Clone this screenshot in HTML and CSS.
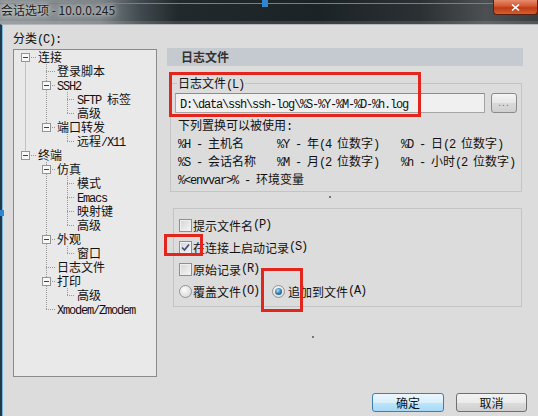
FILE: index.html
```html
<!DOCTYPE html>
<html lang="zh-CN">
<head>
<meta charset="utf-8">
<title>会话选项</title>
<link rel="stylesheet" href="styles.css">
</head>
<body>
<div class="window">
  <div class="titlebar">
    <span class="title">会话选项 - 10.0.0.245</span>
    <button class="close" aria-label="关闭">
      <svg width="9" height="7" viewBox="0 0 9 7"><path d="M1 0.5L8 6.5M8 0.5L1 6.5" stroke="#fff" stroke-width="1.6" fill="none"/></svg>
    </button>
  </div>
  <div class="client">
    <div class="top">
      <div class="left">
        <div class="cat-label">分类<span class="m">(C):</span></div>
        <div class="tree">
          <svg class="tree-lines" width="142" height="326" viewBox="0 0 142 326">
            <path class="dots" d="M11.5 7.5V105.5M32.5 14V77.5M53.5 42V63.5M53.5 84V91.5M32.5 112V259.5M53.5 126V175.5M53.5 196V203.5M53.5 238V245.5
              M11 7.5H22M11 105.5H22
              M32 21.5H41M32 35.5H41M32 77.5H41M32 119.5H41M32 189.5H41M32 217.5H41M32 231.5H41M32 259.5H41
              M53 49.5H61M53 63.5H61M53 91.5H61M53 133.5H61M53 147.5H61M53 161.5H61M53 175.5H61M53 203.5H61M53 245.5H61"/>
            <g class="exp">
              <rect x="7.5" y="3.5" width="8" height="8"/>
              <rect x="7.5" y="101.5" width="8" height="8"/>
              <rect x="28.5" y="31.5" width="8" height="8"/>
              <rect x="28.5" y="73.5" width="8" height="8"/>
              <rect x="28.5" y="115.5" width="8" height="8"/>
              <rect x="28.5" y="185.5" width="8" height="8"/>
              <rect x="28.5" y="227.5" width="8" height="8"/>
            </g>
            <path class="minus" d="M9 7.5H14M9 105.5H14M30 35.5H35M30 77.5H35M30 119.5H35M30 189.5H35M30 231.5H35"/>
          </svg>
          <ul class="tree-list">
            <li class="l0">连接</li>
            <li class="l1">登录脚本</li>
            <li class="l1"><span class="m">SSH2</span></li>
            <li class="l2"><span class="m">SFTP </span>标签</li>
            <li class="l2">高级</li>
            <li class="l1">端口转发</li>
            <li class="l2">远程<span class="m">/X11</span></li>
            <li class="l0">终端</li>
            <li class="l1">仿真</li>
            <li class="l2">模式</li>
            <li class="l2"><span class="m">Emacs</span></li>
            <li class="l2">映射键</li>
            <li class="l2">高级</li>
            <li class="l1">外观</li>
            <li class="l2">窗口</li>
            <li class="l1">日志文件</li>
            <li class="l1">打印</li>
            <li class="l2">高级</li>
            <li class="l1"><span class="m">Xmodem/Zmodem</span></li>
          </ul>
        </div>
      </div>
      <div class="right">
        <div class="header">日志文件</div>
        <fieldset class="group g1">
          <legend>日志文件<span class="m">(L)</span></legend>
          <div class="file-row">
            <div class="input"><span class="m">D:\data\ssh\ssh-log\%S-%Y-%M-%D-%h.log</span></div>
            <button class="browse">...</button>
          </div>
          <div class="hint">下列置换可以被使用<span class="m">:</span></div>
          <div class="subs">
            <div><span class="m">%H - </span>主机名</div>
            <div><span class="m">%Y - </span>年<span class="m">(4 </span>位数字<span class="m">)</span></div>
            <div><span class="m">%D - </span>日<span class="m">(2 </span>位数字<span class="m">)</span></div>
            <div><span class="m">%S - </span>会话名称</div>
            <div><span class="m">%M - </span>月<span class="m">(2 </span>位数字<span class="m">)</span></div>
            <div><span class="m">%h - </span>小时<span class="m">(2 </span>位数字<span class="m">)</span></div>
            <div class="wide"><span class="m">%&lt;envvar&gt;% - </span>环境变量</div>
          </div>
        </fieldset>
        <fieldset class="group g2">
          <div class="opt"><span class="cb"></span>提示文件名<span class="m">(P)</span></div>
          <div class="opt"><span class="cb"><svg width="11" height="11" viewBox="0 0 11 11"><path d="M2 5.5L4.5 8L9 2.5" stroke="#3f4f78" stroke-width="1.7" fill="none"/></svg></span>在连接上启动记录<span class="m">(S)</span></div>
          <div class="opt"><span class="cb"></span>原始记录<span class="m">(R)</span></div>
          <div class="opt">
            <span class="rb"></span>覆盖文件<span class="m">(O)</span>
            <span class="rb on second"></span>追加到文件<span class="m">(A)</span>
          </div>
        </fieldset>
      </div>
    </div>
    <div class="buttons">
      <button class="btn btn-ok">确定</button>
      <button class="btn btn-cancel">取消</button>
    </div>
  </div>

  <span class="handle h-top"></span>
  <span class="handle h-left"></span>
  <span class="speck s1"></span>
  <span class="speck s2"></span>
  <span class="anno a1"></span>
  <span class="anno a2"></span>
  <span class="anno a3"></span>
</div>
</body>
</html>
```

FILE: styles.css
```css
* { box-sizing: border-box; }
html, body { margin: 0; padding: 0; }
body {
  width: 538px;
  height: 416px;
  overflow: hidden;
  background: #dcdcdc;
  font-family: "Noto Sans CJK SC", "Liberation Sans", sans-serif;
  font-size: 12px;
  color: #111;
}
.m {
  font-family: "Liberation Mono", "DejaVu Sans Mono", monospace;
  font-size: 12px;
  letter-spacing: -1.2px;
  white-space: pre;
}
.window {
  position: relative;
  width: 538px;
  height: 416px;
  display: flex;
  flex-direction: column;
  background: #dcdcdc;
}

/* title bar */
.titlebar {
  height: 24px;
  flex: none;
  display: flex;
  justify-content: space-between;
  align-items: flex-start;
  background:
    linear-gradient(to bottom, transparent 3px, #3d8fd4 3px, #3d8fd4 4px, transparent 4px, transparent 21px, rgba(255,255,255,0.12) 21px),
    linear-gradient(90deg, #8d9497 0, #7a8286 100px, #414a4e 140px, #22292d 178px, #1c2327 320px, #2b3033 420px, #4d5052 486px, #3a3d40 538px);
}
.title {
  padding: 2px 0 0 1px;
  line-height: 16px;
  color: #1e1e1e;
  white-space: nowrap;
  text-shadow: 0 0 4px #e6e6e6, 0 0 8px #cfcfcf;
}
.close {
  width: 45px;
  height: 15px;
  padding: 0;
  border: 1px solid #5b2010;
  border-top: none;
  border-radius: 0 0 4px 4px;
  background: linear-gradient(#e68c6c, #d35531 45%, #c03a15 55%, #d4602e);
  display: flex;
  align-items: center;
  justify-content: center;
}

/* client area */
.client {
  flex: 1;
  display: flex;
  flex-direction: column;
  border-left: 2px solid #22394a;
  border-top: 1px solid #b5b8ba;
  box-shadow: inset 1px 0 0 #7cb8de;
  padding: 6px 11px 4px 11px;
}
.top {
  display: flex;
  gap: 10px;
  height: 346px;
  flex: none;
}
.left {
  width: 144px;
  flex: none;
  display: flex;
  flex-direction: column;
}
.cat-label {
  height: 14px;
  line-height: 14px;
  margin-bottom: 4px;
}
.tree {
  position: relative;
  height: 328px;
  border: 1px solid #8b8b8b;
  background: #e9e9e9;
}
.tree-lines {
  position: absolute;
  left: 0;
  top: 0;
}
.tree-lines .dots {
  fill: none;
  stroke: #9a9a9a;
  stroke-width: 1;
  stroke-dasharray: 1 1;
}
.tree-lines .exp rect {
  fill: #f7f7f7;
  stroke: #959595;
  stroke-width: 1;
}
.tree-lines .minus {
  fill: none;
  stroke: #404040;
  stroke-width: 1;
}
.tree-list {
  position: relative;
  list-style: none;
  margin: 0;
  padding: 0;
}
.tree-list li {
  height: 14px;
  line-height: 14px;
  white-space: nowrap;
}
.tree-list .l0 { padding-left: 24px; }
.tree-list .l1 { padding-left: 43px; }
.tree-list .l2 { padding-left: 63px; }

/* right panel */
.right {
  width: 356px;
  flex: none;
  display: flex;
  flex-direction: column;
}
.header {
  margin-top: 17px;
  height: 18px;
  line-height: 18px;
  padding-left: 14px;
  background: #c5cad1;
  font-weight: bold;
  color: #333;
}
fieldset.group {
  min-width: 0;
  border: 1px solid #c4c4c4;
}
.g1 {
  margin: 10px 1px 0 3px;
  padding: 3px 4px 3px 4px;
}
.g1 legend {
  margin-left: 2px;
  padding: 0 1px;
  line-height: 14px;
  height: 14px;
}
.file-row {
  display: flex;
  gap: 6px;
  align-items: flex-start;
}
.input {
  width: 310px;
  height: 20px;
  border: 1px solid #a6a6a6;
  border-top-color: #8c8c8c;
  background: #f0f0f0;
  padding-left: 4px;
  line-height: 18px;
  white-space: nowrap;
}
.browse {
  width: 26px;
  height: 20px;
  padding: 0;
  border: 1px solid #8a8a8a;
  border-radius: 3px;
  background: linear-gradient(#f4f4f4, #e6e6e6 50%, #d9d9d9 50%, #d0d0d0);
  font-family: "Liberation Sans", sans-serif;
  font-size: 10px;
  line-height: 14px;
  color: #707070;
  letter-spacing: 1px;
}
.hint {
  margin: 5px 0 0 3px;
  height: 14px;
  line-height: 14px;
}
.subs {
  margin: 2px 0 0 3px;
  display: grid;
  grid-template-columns: 99px 124px auto;
  grid-auto-rows: 18px;
  line-height: 18px;
  white-space: nowrap;
}
.subs .wide { grid-column: 1 / -1; }

.g2 {
  margin: 16px 1px 0 6px;
  padding: 5px 4px 4px 5px;
}
.opt {
  height: 22px;
  display: flex;
  align-items: center;
  white-space: nowrap;
}
.cb {
  width: 13px;
  height: 13px;
  flex: none;
  margin-right: 1px;
  border: 1px solid #8f8f8f;
  background: linear-gradient(135deg, #d4d4d4, #f6f6f6);
  box-shadow: inset 0 0 0 1px #efefef;
  display: flex;
  align-items: center;
  justify-content: center;
}
.rb {
  width: 13px;
  height: 13px;
  flex: none;
  margin-right: 1px;
  border-radius: 50%;
  border: 1px solid #949494;
  background: radial-gradient(circle at 40% 35%, #fbfbfb, #d2d2d2);
  display: flex;
  align-items: center;
  justify-content: center;
}
.rb.second {
  margin-left: 13px;
  margin-right: 3px;
}
.rb.on::after {
  content: "";
  width: 7px;
  height: 7px;
  border-radius: 50%;
  background: radial-gradient(circle at 40% 35%, #a8def6, #2d77a8 55%, #1a4c70);
}

/* dialog buttons */
.buttons {
  margin-top: 16px;
  display: flex;
  justify-content: flex-end;
  gap: 12px;
}
.btn {
  height: 19px;
  padding: 0;
  border-radius: 3px;
  font-family: "Noto Sans CJK SC", sans-serif;
  font-size: 12px;
  line-height: 17px;
  color: #111;
}
.btn-ok {
  width: 72px;
  border: 1px solid #3c7fb1;
  background: linear-gradient(#eaf6fd, #d9f0fc 50%, #bee6fd 50%, #a7d9f5);
}
.btn-cancel {
  width: 71px;
  border: 1px solid #707070;
  background: linear-gradient(#f2f2f2, #ebebeb 50%, #dddddd 50%, #cfcfcf);
}

/* overlays: editor handles, specks and red annotation boxes */
.handle {
  position: absolute;
  background: #2f86d0;
}
.h-top { left: 262px; top: 0; width: 6px; height: 7px; }
.h-left { left: 0; top: 210px; width: 4px; height: 6px; }
.speck {
  position: absolute;
  width: 2px;
  height: 2px;
  background: #555;
  border-radius: 1px;
}
.s1 { left: 329px; top: 196px; }
.s2 { left: 312px; top: 336px; }
.anno {
  position: absolute;
  border: 3px solid #e3261d;
}
.a1 { left: 169px; top: 72px; width: 252px; height: 45px; }
.a2 { left: 164px; top: 234px; width: 39px; height: 22px; }
.a3 { left: 261px; top: 268px; width: 42px; height: 44px; }
```
